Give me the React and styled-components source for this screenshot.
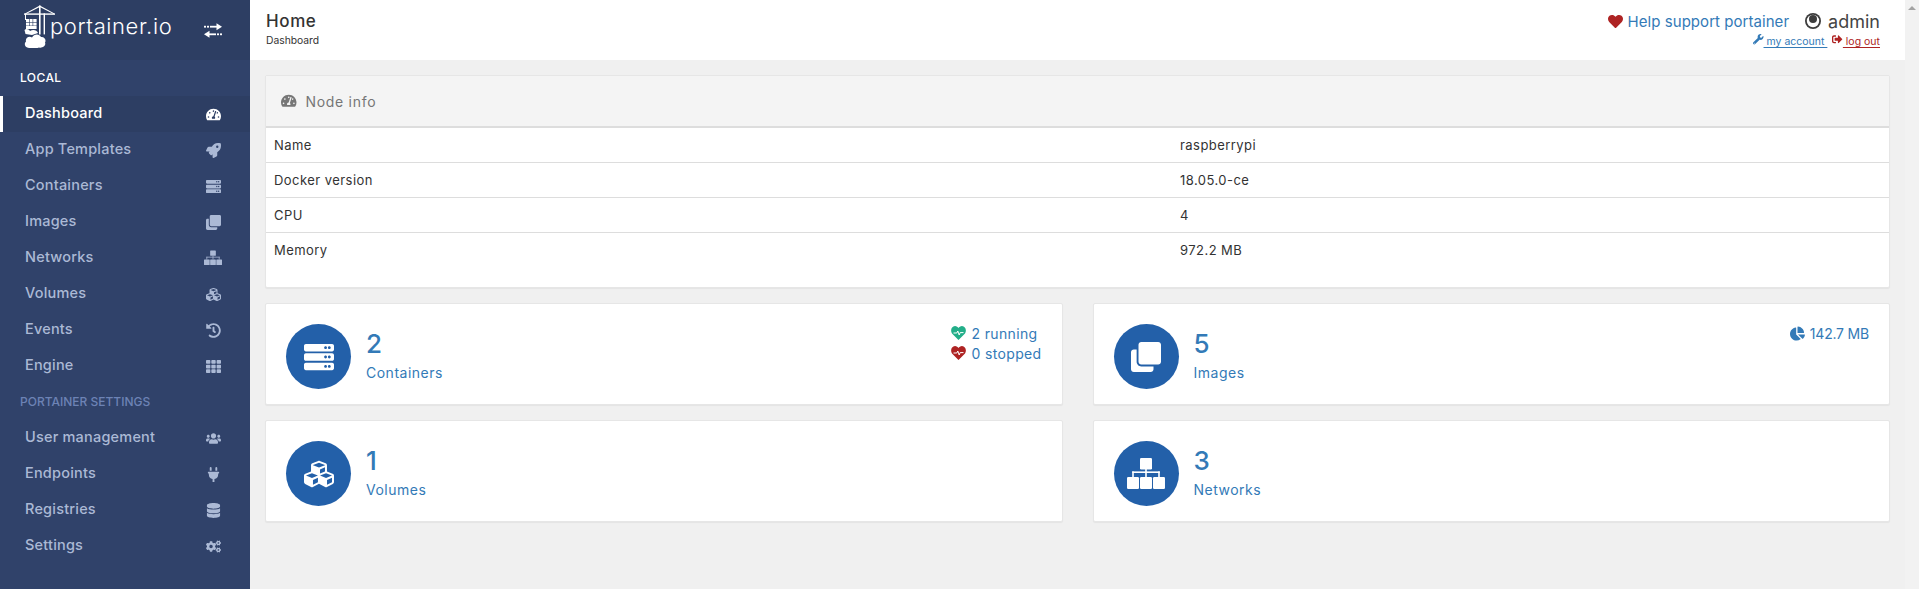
import React from "react";
import styled, {createGlobalStyle} from "styled-components";
import {
  FaChartPie,
  FaClone,
  FaCogs,
  FaCubes,
  FaDatabase,
  FaHeart,
  FaHistory,
  FaPlug,
  FaRocket,
  FaServer,
  FaSignOutAlt,
  FaTachometerAlt,
  FaTh,
  FaUsers,
  FaWrench,
} from "react-icons/fa";

function SitemapIcon() {
  return (
    <svg width="1.267em" height="1.033em" viewBox="0 0 38 31" fill="currentColor">
      <rect x="13" y="0" width="12" height="11.5" rx="1.2" />
      <rect x="18.2" y="11" width="1.6" height="8" />
      <rect x="5.2" y="13.4" width="27.6" height="1.6" />
      <rect x="5.2" y="13.4" width="1.6" height="6" />
      <rect x="31.2" y="13.4" width="1.6" height="6" />
      <rect x="0" y="19" width="12" height="12" rx="1.2" />
      <rect x="13" y="19" width="12" height="12" rx="1.2" />
      <rect x="26" y="19" width="12" height="12" rx="1.2" />
    </svg>
  );
}

function HeartbeatIcon() {
  return (
    <svg width="15" height="14" viewBox="0 0 15 14">
      <path
        d="M7.5 14 L1 7.4 C-1 4.6 0.6 0 4 0 C5.6 0 6.8 1 7.5 2 C8.2 1 9.4 0 11 0 C14.4 0 16 4.6 14 7.4 Z"
        fill="currentColor"
      />
      <path d="M2.5 7 H5.8 L6.8 5 L8.2 9 L9.2 6.6 H12.5" fill="none" stroke="#fff" strokeWidth="1" />
    </svg>
  );
}

function TransferIcon() {
  return (
    <svg width="18" height="15" viewBox="0 0 18 15" fill="#fff">
      <rect x="0" y="2.8" width="2" height="1.8" />
      <rect x="3" y="2.8" width="2" height="1.8" />
      <rect x="6" y="2.8" width="7" height="1.8" />
      <path d="M12.5 0.2 L18 3.7 L12.5 7.2 Z" />
      <rect x="5" y="10.4" width="7" height="1.8" />
      <rect x="13" y="10.4" width="2" height="1.8" />
      <rect x="16" y="10.4" width="2" height="1.8" />
      <path d="M5.5 7.8 L0 11.3 L5.5 14.8 Z" />
    </svg>
  );
}

function UserCircleIcon() {
  return (
    <svg width="16" height="16" viewBox="0 0 16 16">
      <circle cx="8" cy="8" r="8" fill="#3d3d3d" />
      <circle cx="8" cy="8" r="6.2" fill="#fff" />
      <circle cx="8" cy="6" r="4" fill="#3d3d3d" />
    </svg>
  );
}

function Logo() {
  return (
    <svg width="31" height="43" viewBox="0 0 31 43" fill="#fff">
      <rect x="0" y="8.4" width="31" height="1.4" />
      <rect x="15" y="0.5" width="1.6" height="29" />
      <rect x="19.6" y="8.4" width="1.4" height="21" />
      <path d="M15.8 0.5 L30.5 8.6 L30 9.2 L15.8 1.9 L1.5 9.2 L1 8.6 Z" />
      <rect x="1" y="9" width="1" height="6" />
      <rect x="2" y="14" width="3" height="3" />
      <rect x="5.6" y="14" width="3" height="3" />
      <rect x="9.2" y="14" width="3.4" height="3" />
      <rect x="2" y="17.6" width="3" height="3" />
      <rect x="5.6" y="17.6" width="3" height="3" />
      <rect x="9.2" y="17.6" width="3.4" height="3" />
      <rect x="2" y="21" width="10.6" height="3" />
      <path d="M0.5 25 C2 23 5 24 6 26 C9 24 13 25 14 28 L8 30 L1.5 29 Z" />
      <path d="M5 43 C1 43 -0.5 38.5 2 36.5 C1 33 5 30.5 8 32.5 C10 28.5 15.5 28.5 17 32 C20.5 31.5 22.5 35 21 37.5 C22.5 41 18 43.5 15 42.5 C12.5 43.6 8 43.8 5 43 Z" />
    </svg>
  );
}

const endpointItems = [
  {label: "Dashboard", icon: FaTachometerAlt, active: true},
  {label: "App Templates", icon: FaRocket},
  {label: "Containers", icon: FaServer},
  {label: "Images", icon: FaClone},
  {label: "Networks", icon: SitemapIcon},
  {label: "Volumes", icon: FaCubes},
  {label: "Events", icon: FaHistory},
  {label: "Engine", icon: FaTh},
];

const settingsItems = [
  {label: "User management", icon: FaUsers},
  {label: "Endpoints", icon: FaPlug},
  {label: "Registries", icon: FaDatabase},
  {label: "Settings", icon: FaCogs},
];

const nodeInfo = [
  ["Name", "raspberrypi"],
  ["Docker version", "18.05.0-ce"],
  ["CPU", "4"],
  ["Memory", "972.2 MB"],
];

function NavList({items}) {
  return items.map(item => (
    <NavItem key={item.label} $active={item.active}>
      <NavLabel>{item.label}</NavLabel>
      <NavIcon>
        <item.icon />
      </NavIcon>
    </NavItem>
  ));
}

export default function App() {
  return (
    <Page>
      <GlobalStyle />
      <Sidebar>
        <Brand>
          <LogoLink>
            <Logo />
            <LogoText>portainer.io</LogoText>
          </LogoLink>
          <BrandToggle>
            <TransferIcon />
          </BrandToggle>
        </Brand>
        <SectionTitle>LOCAL</SectionTitle>
        <NavList items={endpointItems} />
        <SectionTitle $muted>PORTAINER SETTINGS</SectionTitle>
        <NavList items={settingsItems} />
      </Sidebar>
      <Main>
        <Header>
          <div>
            <PageTitle>Home</PageTitle>
            <Breadcrumb>Dashboard</Breadcrumb>
          </div>
          <UserBox>
            <UserTop>
              <SupportLink>
                <FaHeart />
                Help support portainer
              </SupportLink>
              <UserName>
                <UserCircleIcon />
                admin
              </UserName>
            </UserTop>
            <UserLinks>
              <AccountLink>
                <FaWrench />
                <u> my account </u>
              </AccountLink>
              <LogoutLink>
                <FaSignOutAlt />
                <u> log out</u>
              </LogoutLink>
            </UserLinks>
          </UserBox>
        </Header>
        <Content>
          <InfoCard>
            <InfoHeader>
              <FaTachometerAlt />
              Node info
            </InfoHeader>
            <InfoTable>
              {nodeInfo.map(([key, value]) => (
                <InfoRow key={key}>
                  <span>{key}</span>
                  <span>{value}</span>
                </InfoRow>
              ))}
            </InfoTable>
          </InfoCard>
          <StatGrid>
            <StatCard>
              <StatIcon>
                <FaServer />
              </StatIcon>
              <StatText>
                <StatNumber>2</StatNumber>
                <StatLabel>Containers</StatLabel>
              </StatText>
              <StatExtra>
                <ExtraLine>
                  <ExtraIcon $color="#23ae89">
                    <HeartbeatIcon />
                  </ExtraIcon>
                  2 running
                </ExtraLine>
                <ExtraLine>
                  <ExtraIcon $color="#ae2323">
                    <HeartbeatIcon />
                  </ExtraIcon>
                  0 stopped
                </ExtraLine>
              </StatExtra>
            </StatCard>
            <StatCard>
              <StatIcon>
                <FaClone />
              </StatIcon>
              <StatText>
                <StatNumber>5</StatNumber>
                <StatLabel>Images</StatLabel>
              </StatText>
              <StatExtra>
                <ExtraLine $tight>
                  <ExtraIcon $color="#337ab7">
                    <FaChartPie />
                  </ExtraIcon>
                  142.7 MB
                </ExtraLine>
              </StatExtra>
            </StatCard>
            <StatCard>
              <StatIcon>
                <FaCubes />
              </StatIcon>
              <StatText>
                <StatNumber>1</StatNumber>
                <StatLabel>Volumes</StatLabel>
              </StatText>
            </StatCard>
            <StatCard>
              <StatIcon>
                <SitemapIcon />
              </StatIcon>
              <StatText>
                <StatNumber>3</StatNumber>
                <StatLabel>Networks</StatLabel>
              </StatText>
            </StatCard>
          </StatGrid>
        </Content>
      </Main>
      <Scrollbar>
        <ScrollArrow />
      </Scrollbar>
    </Page>
  );
}

const GlobalStyle = createGlobalStyle`
  html, body {
    margin: 0;
    height: 100%;
    overflow: hidden;
  }

  body {
    font-family: Inter, "Open Sans", sans-serif;
    font-size: 14px;
    color: #333;
    background: #f0f0f0;
  }
`;

const Page = styled.div`
  display: flex;
  height: 589px;
  background: #f0f0f0;
`;

const Sidebar = styled.nav`
  width: 250px;
  flex-shrink: 0;
  background: #30426a;
`;

const Brand = styled.div`
  height: 60px;
  background: #2d3e63;
  display: flex;
  align-items: flex-start;
  justify-content: space-between;
  padding: 5px 28px 0 24px;
  box-sizing: border-box;
`;

const LogoLink = styled.div`
  display: flex;
  align-items: flex-start;
`;

const LogoText = styled.span`
  margin: 6px 0 0 -5px;
  font-weight: 300;
  font-size: 22px;
  letter-spacing: 0.6px;
  line-height: 30px;
  color: #fff;
`;

const BrandToggle = styled.div`
  display: flex;
  margin-top: 18px;
`;

const SectionTitle = styled.div`
  height: 36px;
  line-height: 36px;
  padding-left: 20px;
  font-size: 12px;
  font-weight: 500;
  letter-spacing: ${props => (props.$muted ? "0" : "0.4px")};
  color: ${props => (props.$muted ? "#6d83b5" : "#fff")};
`;

const NavItem = styled.div`
  height: 36px;
  display: flex;
  align-items: center;
  justify-content: space-between;
  box-sizing: border-box;
  padding: 0 28px 0 ${props => (props.$active ? "22px" : "25px")};
  font-size: 14.5px;
  font-weight: 500;
  letter-spacing: 0.2px;
  color: ${props => (props.$active ? "#fff" : "#abb9d5")};
  background: ${props => (props.$active ? "#2d3e63" : "transparent")};
  border-left: ${props => (props.$active ? "3px solid #fff" : "0")};
`;

const NavLabel = styled.span`
  margin-bottom: 3px;
`;

const NavIcon = styled.span`
  width: 18px;
  display: flex;
  justify-content: center;
  font-size: 15px;
`;

const Main = styled.main`
  flex: 1;
  min-width: 0;
`;

const Header = styled.header`
  height: 60px;
  background: #fff;
  display: flex;
  justify-content: space-between;
  box-sizing: border-box;
  padding: 11px 25px 0 16px;
`;

const PageTitle = styled.div`
  font-size: 17px;
  line-height: 20px;
  font-weight: 500;
  letter-spacing: 0.6px;
  color: #333;
`;

const Breadcrumb = styled.div`
  font-size: 10.3px;
  line-height: 14px;
  margin-top: 2px;
  color: #333;
`;

const UserBox = styled.div`
  text-align: right;
`;

const UserTop = styled.div`
  display: flex;
  align-items: center;
  gap: 16px;
  height: 20px;
`;

const SupportLink = styled.span`
  display: flex;
  align-items: center;
  gap: 5px;
  font-size: 15px;
  letter-spacing: 0.05px;
  color: #337ab7;

  svg {
    color: #ae2323;
    font-size: 15px;
  }
`;

const UserName = styled.span`
  display: flex;
  align-items: center;
  gap: 7px;
  font-size: 18px;
  color: #444;
`;

const UserLinks = styled.div`
  display: flex;
  justify-content: flex-end;
  gap: 5px;
  margin-top: 3px;
  font-size: 10.5px;
  line-height: 14px;

  u {
    text-underline-offset: 2px;
  }
`;

const AccountLink = styled.span`
  color: #337ab7;
  white-space: pre;
`;

const LogoutLink = styled.span`
  color: #ae2323;
  white-space: pre;
`;

const Content = styled.div`
  padding: 15px;
`;

const InfoCard = styled.section`
  background: #fff;
  border: 1px solid #e6e6e6;
  border-radius: 2px;
  height: 213px;
  box-sizing: border-box;
  box-shadow: 0 1px 1px rgba(0, 0, 0, 0.05);
`;

const InfoHeader = styled.div`
  height: 51px;
  box-sizing: border-box;
  display: flex;
  align-items: center;
  gap: 9px;
  padding-left: 15px;
  background: #f4f4f4;
  border-bottom: 1px solid #ddd;
  color: #767676;
  font-size: 14px;
  letter-spacing: 0.7px;

  svg {
    font-size: 15.5px;
  }
`;

const InfoTable = styled.div`
  border-top: 1px solid #ddd;
`;

const InfoRow = styled.div`
  display: grid;
  grid-template-columns: 906px 1fr;
  height: 34px;
  align-items: center;
  padding-left: 8px;
  border-bottom: 1px solid #ddd;
  font-size: 13px;
  letter-spacing: 0.45px;
  color: #333;

  &:last-child {
    border-bottom: 0;
  }
`;

const StatGrid = styled.div`
  display: grid;
  grid-template-columns: 1fr 1fr;
  column-gap: 30px;
  row-gap: 15px;
  margin-top: 15px;
`;

const StatCard = styled.section`
  height: 102px;
  box-sizing: border-box;
  background: #fff;
  border: 1px solid #e6e6e6;
  border-radius: 2px;
  box-shadow: 0 1px 1px rgba(0, 0, 0, 0.05);
  display: flex;
  padding: 20px 20px 0 20px;
`;

const StatIcon = styled.div`
  width: 65px;
  height: 65px;
  border-radius: 50%;
  background: #2360a9;
  color: #fff;
  display: flex;
  align-items: center;
  justify-content: center;
  font-size: 30px;
`;

const StatText = styled.div`
  margin-left: 15px;
  color: #337ab7;
`;

const StatNumber = styled.div`
  font-size: 26px;
  line-height: 30px;
  font-weight: 500;
  margin-top: 5px;
`;

const StatLabel = styled.div`
  font-size: 14px;
  line-height: 20px;
  letter-spacing: 0.5px;
  margin-top: 4px;
`;

const StatExtra = styled.div`
  margin: -1px 0 0 auto;
  color: #337ab7;
  font-size: 14px;
`;

const ExtraLine = styled.div`
  display: flex;
  align-items: center;
  gap: 5px;
  height: 20px;
  letter-spacing: ${props => (props.$tight ? "-0.2px" : "0.35px")};
`;

const ExtraIcon = styled.span`
  display: flex;
  color: ${props => props.$color};
  font-size: 15px;
`;

const Scrollbar = styled.div`
  width: 14px;
  flex-shrink: 0;
  background: #f2f2f2;
  display: flex;
  justify-content: center;
  padding-top: 6px;
  box-sizing: border-box;
`;

const ScrollArrow = styled.div`
  width: 0;
  height: 0;
  border: 4px solid transparent;
  border-top: 0;
  border-bottom: 4px solid #a3a3a3;
`;
